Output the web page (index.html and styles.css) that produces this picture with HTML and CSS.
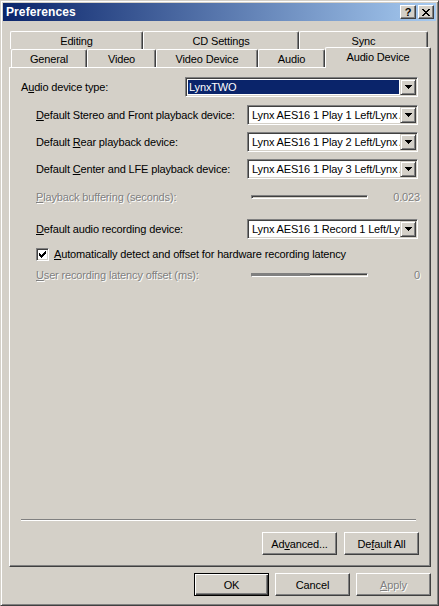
FILE: index.html
```html
<!DOCTYPE html>
<html>
<head>
<meta charset="utf-8">
<title>Preferences</title>
<link rel="stylesheet" href="styles.css">
</head>
<body>
<div class="window">
  <div class="titlebar">
    <span class="title">Preferences</span>
    <div class="caption-btns">
      <span class="cbtn help">?</span>
      <span class="cbtn">
        <svg width="8" height="7" viewBox="0 0 8 7" shape-rendering="crispEdges"><path d="M0 0h2v1h-2zM6 0h2v1h-2zM1 1h2v1h-2zM5 1h2v1h-2zM2 2h4v1h-4zM3 3h2v1h-2zM2 4h4v1h-4zM1 5h2v1h-2zM5 5h2v1h-2zM0 6h2v1h-2zM6 6h2v1h-2z" fill="#000"/></svg>
      </span>
    </div>
  </div>
  <div class="body">
    <div class="tabs">
      <div class="tabrow back">
        <div class="tab w-editing">Editing</div>
        <div class="tab w-cd">CD Settings</div>
        <div class="tab w-sync">Sync</div>
      </div>
      <div class="tabrow front">
        <div class="tab w-general">General</div>
        <div class="tab w-video">Video</div>
        <div class="tab w-vdev">Video Device</div>
        <div class="tab w-audio">Audio</div>
        <div class="tab w-adev sel">Audio Device</div>
      </div>
    </div>
    <div class="panel">
      <div class="grid">
        <div class="row">
          <span>A<u>u</u>dio device type:</span>
          <div class="combo wide">
            <div class="combo-text"><span class="hilite">LynxTWO</span></div>
            <span class="arrow"><svg width="7" height="4" viewBox="0 0 7 4" shape-rendering="crispEdges"><path d="M0 0h7v1h-7zM1 1h5v1h-5zM2 2h3v1h-3zM3 3h1v1h-1z" fill="#000"/></svg></span>
          </div>
        </div>
        <div class="row ind">
          <span><u>D</u>efault Stereo and Front playback device:</span>
          <div class="combo">
            <div class="combo-text">Lynx AES16 1 Play 1 Left/Lynx AES16 1 Play 1 Right</div>
            <span class="arrow"><svg width="7" height="4" viewBox="0 0 7 4" shape-rendering="crispEdges"><path d="M0 0h7v1h-7zM1 1h5v1h-5zM2 2h3v1h-3zM3 3h1v1h-1z" fill="#000"/></svg></span>
          </div>
        </div>
        <div class="row ind">
          <span>Default <u>R</u>ear playback device:</span>
          <div class="combo">
            <div class="combo-text">Lynx AES16 1 Play 2 Left/Lynx AES16 1 Play 2 Right</div>
            <span class="arrow"><svg width="7" height="4" viewBox="0 0 7 4" shape-rendering="crispEdges"><path d="M0 0h7v1h-7zM1 1h5v1h-5zM2 2h3v1h-3zM3 3h1v1h-1z" fill="#000"/></svg></span>
          </div>
        </div>
        <div class="row ind">
          <span>Default <u>C</u>enter and LFE playback device:</span>
          <div class="combo">
            <div class="combo-text">Lynx AES16 1 Play 3 Left/Lynx AES16 1 Play 3 Right</div>
            <span class="arrow"><svg width="7" height="4" viewBox="0 0 7 4" shape-rendering="crispEdges"><path d="M0 0h7v1h-7zM1 1h5v1h-5zM2 2h3v1h-3zM3 3h1v1h-1z" fill="#000"/></svg></span>
          </div>
        </div>
        <div class="row ind">
          <span class="disabled"><u>P</u>layback buffering (seconds):</span>
          <div class="slider-wrap">
            <span class="track"></span>
            <span class="val disabled">0.023</span>
          </div>
        </div>
        <div class="row ind">
          <span><u>D</u>efault audio recording device:</span>
          <div class="combo">
            <div class="combo-text">Lynx AES16 1 Record 1 Left/Lynx AES16 1 Record 1 Right</div>
            <span class="arrow"><svg width="7" height="4" viewBox="0 0 7 4" shape-rendering="crispEdges"><path d="M0 0h7v1h-7zM1 1h5v1h-5zM2 2h3v1h-3zM3 3h1v1h-1z" fill="#000"/></svg></span>
          </div>
        </div>
        <div class="row ind">
          <span class="chk"><svg width="7" height="7" viewBox="0 0 7 7" shape-rendering="crispEdges"><path d="M6 0h1v1h-1zM5 1h2v1h-2zM0 2h1v1h-1zM4 2h3v1h-3zM0 3h2v1h-2zM3 3h3v1h-3zM0 4h5v1h-5zM1 5h3v1h-3zM2 6h1v1h-1z" fill="#000"/></svg></span>
          <span class="chk-label"><u>A</u>utomatically detect and offset for hardware recording latency</span>
        </div>
        <div class="row ind">
          <span class="disabled"><u>U</u>ser recording latency offset (ms):</span>
          <div class="slider-wrap">
            <span class="track"><span class="track-fill"></span></span>
            <span class="val disabled">0</span>
          </div>
        </div>
      </div>
      <div class="sep"></div>
      <div class="panel-btns">
        <span class="btn">Ad<u>v</u>anced...</span>
        <span class="btn">De<u>f</u>ault All</span>
      </div>
    </div>
    <div class="dlg-btns">
      <span class="btn default">OK</span>
      <span class="btn">Cancel</span>
      <span class="btn disabled"><u>A</u>pply</span>
    </div>
  </div>
</div>
</body>
</html>
```

FILE: styles.css
```css
* { box-sizing: border-box; }
html, body { margin: 0; padding: 0; }
body {
  width: 439px;
  height: 606px;
  overflow: hidden;
  background: #d4d0c8;
  font-family: "Liberation Sans", Arial, sans-serif;
  font-size: 11px;
  letter-spacing: -0.15px;
  color: #000;
}
u { text-decoration: underline; text-underline-offset: 1px; }

.window {
  width: 439px;
  height: 606px;
  border: 1px solid;
  border-color: #d4d0c8 #404040 #404040 #d4d0c8;
  box-shadow: inset 1px 1px #fff, inset -1px -1px #808080;
  padding: 2px;
  display: flex;
  flex-direction: column;
  background: #d4d0c8;
}

.titlebar {
  height: 18px;
  flex: none;
  display: flex;
  align-items: center;
  background: linear-gradient(to right, #0a246a, #a6caf0);
  padding: 0 2px 0 3px;
}
.title {
  flex: 1;
  color: #fff;
  font-weight: bold;
  font-size: 12px;
  letter-spacing: 0.1px;
}
.caption-btns { display: flex; gap: 2px; }
.cbtn {
  width: 16px;
  height: 14px;
  background: #d4d0c8;
  border: 1px solid;
  border-color: #fff #404040 #404040 #fff;
  box-shadow: inset -1px -1px #808080;
  display: flex;
  align-items: center;
  justify-content: center;
}
.help { font-weight: bold; font-size: 11px; line-height: 1; letter-spacing: 0; }

.body {
  flex: 1;
  display: flex;
  flex-direction: column;
  padding: 10px 5px 7px 6px;
}

.tabs { height: 36px; flex: none; display: flex; flex-direction: column; }
.tabrow { display: flex; height: 18px; align-items: flex-start; }
.tabrow.back { padding-left: 1px; }
.tabrow.front { padding-left: 2px; }
.tab {
  height: 18px;
  flex: none;
  background: #d4d0c8;
  border-top: 1px solid #fff;
  border-left: 1px solid #fff;
  border-right: 1px solid #404040;
  box-shadow: inset -1px 0 #808080;
  border-radius: 2px 2px 0 0;
  display: flex;
  align-items: center;
  justify-content: center;
  white-space: nowrap;
}
.tab.sel {
  height: 21px;
  margin-top: -2px;
  padding-bottom: 2px;
  position: relative;
  z-index: 2;
}
.w-editing { width: 133px; }
.w-cd { width: 156px; }
.w-sync { width: 129px; }
.w-general { width: 76px; }
.w-video { width: 69px; }
.w-vdev { width: 102px; }
.w-audio { width: 67px; }
.w-adev { width: 106px; }

.panel {
  height: 500px;
  flex: none;
  border: 1px solid;
  border-color: #fff #404040 #404040 #fff;
  box-shadow: inset -1px -1px #808080;
  display: flex;
  flex-direction: column;
  padding: 9px 12px 11px 11px;
}

.grid {
  display: grid;
  grid-template-rows: 28px 27px 27px 28px 32px 25px 21px 20px;
}
.row {
  height: 20px;
  display: flex;
  align-items: center;
  white-space: nowrap;
}
.row.ind { padding-left: 15px; }

.combo {
  margin-left: auto;
  width: 171px;
  height: 20px;
  display: flex;
  background: #fff;
  border: 1px solid;
  border-color: #808080 #fff #fff #808080;
  box-shadow: inset 1px 1px #404040, inset -1px -1px #d4d0c8;
  padding: 1px;
}
.combo.wide { width: 233px; }
.combo-text {
  flex: 1;
  min-width: 0;
  overflow: hidden;
  white-space: nowrap;
  line-height: 16px;
  padding-left: 3px;
  display: flex;
}
.combo.wide .combo-text { padding: 1px; }
.hilite {
  flex: 1;
  background: #0a246a;
  color: #fff;
  line-height: 14px;
  padding-left: 1px;
}
.arrow {
  width: 16px;
  flex: none;
  background: #d4d0c8;
  border: 1px solid;
  border-color: #d4d0c8 #404040 #404040 #d4d0c8;
  box-shadow: inset 1px 1px #fff, inset -1px -1px #808080;
  display: flex;
  align-items: center;
  justify-content: center;
}

.disabled { color: #808080; text-shadow: 1px 1px 0 #fff; }

.slider-wrap {
  margin-left: auto;
  margin-right: -2px;
  width: 174px;
  display: flex;
  align-items: center;
}
.track {
  margin-left: 5px;
  width: 117px;
  height: 4px;
  border-top: 1px solid #808080;
  border-left: 1px solid #808080;
  border-bottom: 1px solid #fff;
  border-right: 1px solid #fff;
  box-shadow: inset 1px 1px #404040;
  display: flex;
}
.track-fill { width: 58px; background: #808080; }
.val { margin-left: auto; }

.chk {
  width: 13px;
  height: 13px;
  flex: none;
  background: #fff;
  border: 1px solid;
  border-color: #808080 #fff #fff #808080;
  box-shadow: inset 1px 1px #404040, inset -1px -1px #d4d0c8;
  padding: 2px 0 0 2px;
  display: flex;
  align-items: flex-start;
}
.chk-label { margin-left: 5px; }

.sep {
  margin-top: auto;
  margin-right: 2px;
  height: 2px;
  border-top: 1px solid #808080;
  border-bottom: 1px solid #fff;
}
.panel-btns {
  margin-top: 11px;
  margin-right: -1px;
  display: flex;
  justify-content: flex-end;
  gap: 7px;
}
.dlg-btns {
  margin-top: 6px;
  display: flex;
  justify-content: flex-end;
  gap: 6px;
}
.btn {
  width: 75px;
  height: 23px;
  background: #d4d0c8;
  border: 1px solid;
  border-color: #fff #404040 #404040 #fff;
  box-shadow: inset -1px -1px #808080;
  display: flex;
  align-items: center;
  justify-content: center;
  white-space: nowrap;
}
.btn.default {
  border-color: #000;
  box-shadow: inset 1px 1px #fff, inset -1px -1px #404040, inset -2px -2px #808080;
}
```
